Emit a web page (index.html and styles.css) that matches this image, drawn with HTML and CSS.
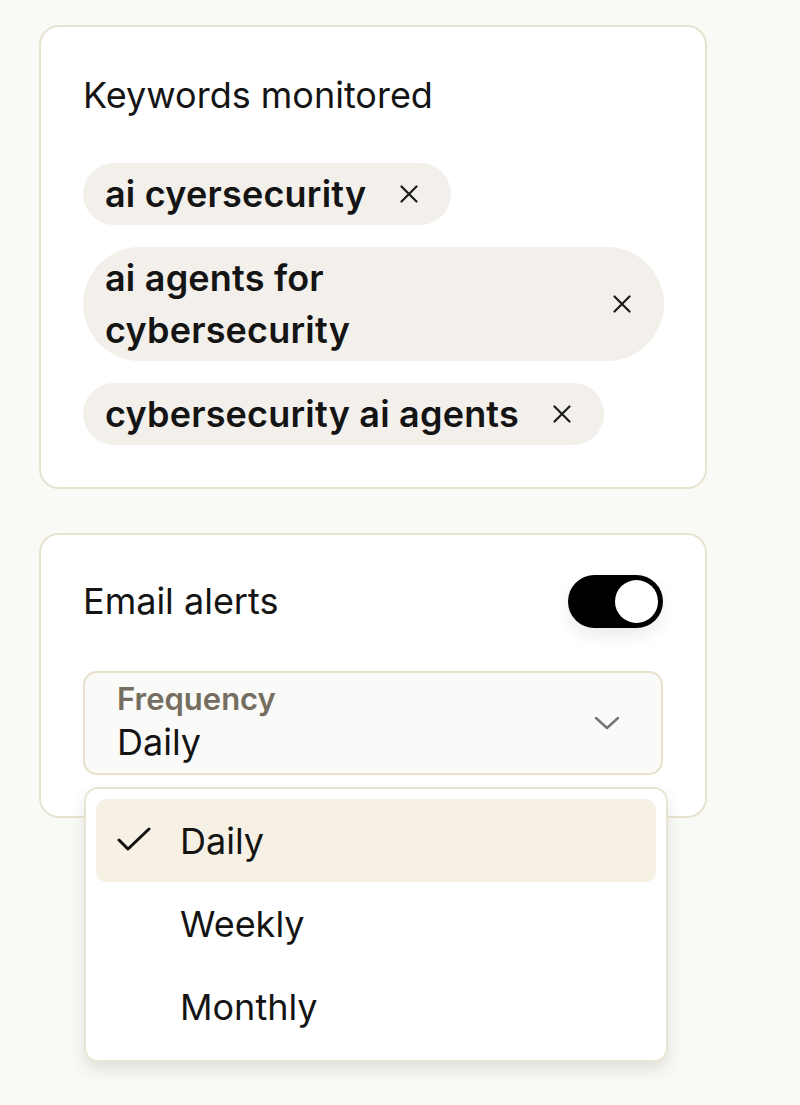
FILE: index.html
```html
<!DOCTYPE html>
<html lang="en">
<head>
<meta charset="utf-8">
<title>Alerts settings</title>
<link rel="stylesheet" href="styles.css">
</head>
<body>
<main class="page">
  <section class="card keywords">
    <h2 class="card-title">Keywords monitored</h2>
    <ul class="chips">
      <li class="chip"><span class="chip-text">ai cyersecurity</span>
        <button class="chip-x" aria-label="Remove"><svg viewBox="0 0 18 18" width="18" height="18"><path d="M1.5 1.5L16.5 16.5M16.5 1.5L1.5 16.5" stroke="#1a1a1a" stroke-width="2.2" fill="none" stroke-linecap="round"/></svg></button></li>
      <li class="chip chip-wrap"><span class="chip-text">ai agents for cybersecurity</span>
        <button class="chip-x" aria-label="Remove"><svg viewBox="0 0 18 18" width="18" height="18"><path d="M1.5 1.5L16.5 16.5M16.5 1.5L1.5 16.5" stroke="#1a1a1a" stroke-width="2.2" fill="none" stroke-linecap="round"/></svg></button></li>
      <li class="chip"><span class="chip-text">cybersecurity ai agents</span>
        <button class="chip-x" aria-label="Remove"><svg viewBox="0 0 18 18" width="18" height="18"><path d="M1.5 1.5L16.5 16.5M16.5 1.5L1.5 16.5" stroke="#1a1a1a" stroke-width="2.2" fill="none" stroke-linecap="round"/></svg></button></li>
    </ul>
  </section>

  <section class="card alerts">
    <div class="alert-row">
      <span class="card-title">Email alerts</span>
      <span class="toggle"><span class="knob"></span></span>
    </div>
    <div class="select-wrap">
      <div class="select">
        <div class="select-text">
          <span class="select-label">Frequency</span>
          <span class="select-value">Daily</span>
        </div>
        <svg class="chev" viewBox="0 0 26 14" width="26" height="14"><path d="M2 2L13 12L24 2" stroke="#757575" stroke-width="2.4" fill="none" stroke-linecap="round" stroke-linejoin="round"/></svg>
      </div>
      <ul class="menu">
        <li class="opt selected"><svg class="check" viewBox="0 0 34 26" width="34" height="26"><path d="M2 13L11 22L32 2" stroke="#111" stroke-width="3" fill="none" stroke-linecap="round" stroke-linejoin="round"/></svg><span>Daily</span></li>
        <li class="opt"><span>Weekly</span></li>
        <li class="opt"><span>Monthly</span></li>
      </ul>
    </div>
  </section>
</main>
</body>
</html>
```

FILE: styles.css
```css
* { box-sizing: border-box; }
html, body { margin: 0; padding: 0; }
body {
  background: #f9f9f6;
  font-family: "Inter", "DejaVu Sans", sans-serif;
  color: #141414;
  width: 800px;
  height: 1105px;
  overflow: hidden;
}
.page {
  padding: 25px 0 0 39px;
  width: 707px;
  display: flex;
  flex-direction: column;
  gap: 44px;
}
.card {
  background: #fff;
  border: 2px solid #e8e3d1;
  border-radius: 20px;
  width: 668px;
}
.keywords {
  padding: 48px 42px 42px 42px;
}
.card-title {
  margin: 0;
  font-size: 36px;
  font-weight: 400;
  line-height: 40px;
  letter-spacing: 0;
}
.chips {
  list-style: none;
  margin: 48px 0 0 0;
  padding: 0;
  display: flex;
  flex-direction: column;
  align-items: flex-start;
  gap: 22px;
}
.chip {
  background: #f3f0eb;
  border-radius: 40px;
  padding: 10px 33px 10px 22px;
  height: 62px;
  display: flex;
  align-items: center;
  gap: 34px;
  font-size: 36px;
  font-weight: 600;
  line-height: 42px;
  letter-spacing: 0.2px;
}
.chip-wrap {
  width: 581px;
  height: 114px;
  border-radius: 58px;
  justify-content: space-between;
  padding: 5px 33px 5px 22px;
  line-height: 52px;
}
.chip-wrap .chip-text { width: 300px; }
.chip-x {
  border: 0;
  background: none;
  padding: 0;
  width: 18px;
  height: 18px;
  display: flex;
  flex: none;
}
.alerts {
  height: 285px;
  padding: 39px 42px 0 42px;
}
.alert-row {
  display: flex;
  justify-content: space-between;
  align-items: center;
  height: 54px;
}
.toggle {
  width: 95px;
  height: 53px;
  background: #000;
  border-radius: 27px;
  box-shadow: 0 8px 16px rgba(0,0,0,0.08);
  display: flex;
  justify-content: flex-end;
  align-items: center;
  padding: 5px;
}
.knob {
  width: 43px;
  height: 43px;
  background: #fff;
  border-radius: 50%;
}
.select-wrap {
  margin-top: 43px;
  position: relative;
}
.select {
  width: 580px;
  height: 104px;
  background: #fafaf8;
  border: 2px solid #e6e0cc;
  border-radius: 14px;
  display: flex;
  align-items: center;
  justify-content: space-between;
  padding: 0 41px 0 32px;
}
.select-text {
  display: flex;
  flex-direction: column;
}
.select-label {
  font-size: 31px;
  font-weight: 600;
  color: #756d5f;
  line-height: 38px;
  letter-spacing: 0;
}
.select-value {
  font-size: 36px;
  line-height: 48px;
}
.chev { margin-top: 0; }
.menu {
  position: absolute;
  left: 1px;
  top: 116px;
  width: 584px;
  margin: 0;
  list-style: none;
  background: #fff;
  border: 2px solid #e9e4d3;
  border-radius: 14px;
  padding: 10px 10px 12px 10px;
  box-shadow: 0 8px 16px rgba(0,0,0,0.10);
  display: flex;
  flex-direction: column;
}
.opt {
  height: 83px;
  display: flex;
  align-items: center;
  padding-left: 84px;
  font-size: 36px;
  border-radius: 10px;
  position: relative;
}
.opt.selected {
  background: #f7f0e4;
}
.check {
  position: absolute;
  left: 21px;
  top: 28px;
}
```
